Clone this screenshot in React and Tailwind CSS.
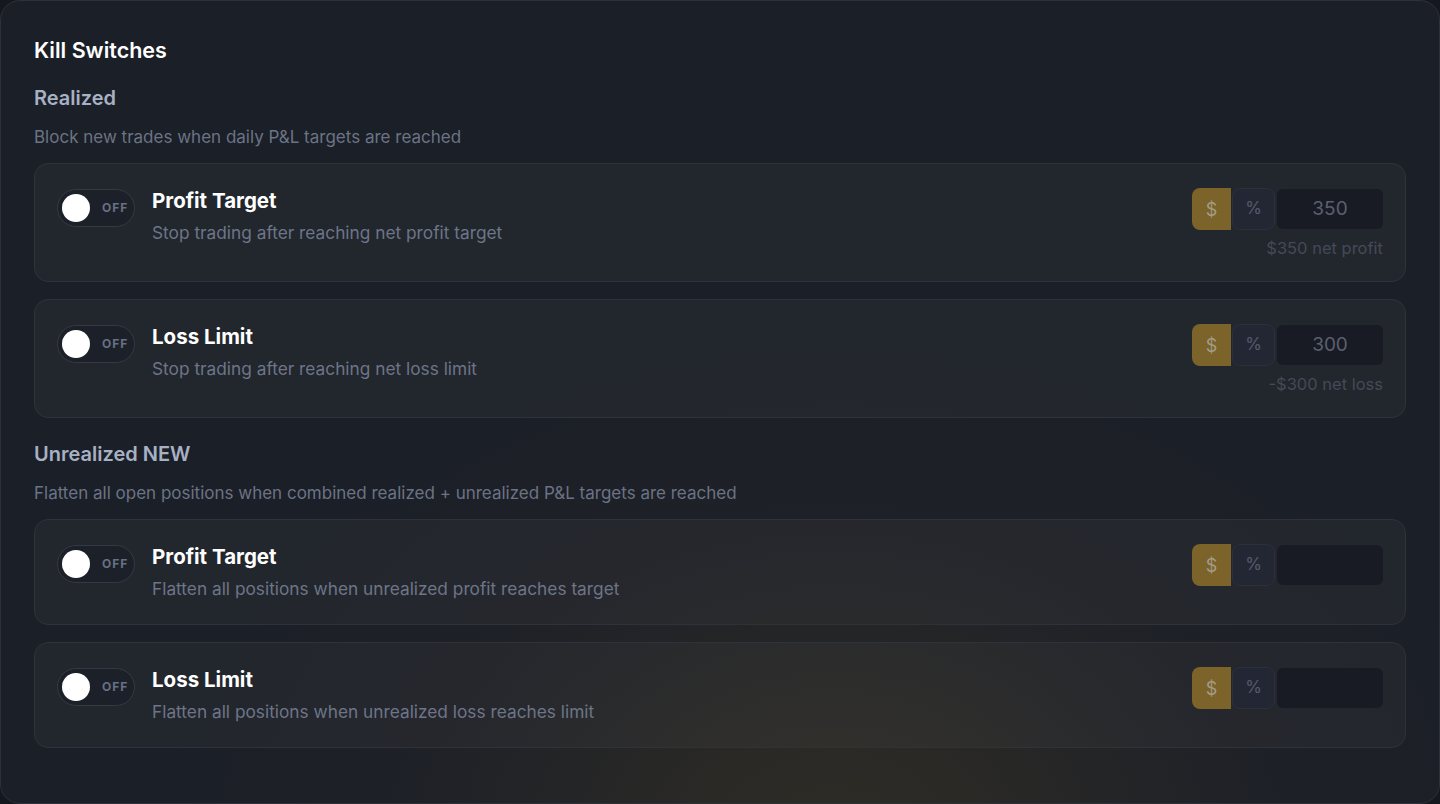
import React from "react";

const font = { fontFamily: "Inter, 'Noto Sans', sans-serif" };

function Toggle() {
  return (
    <div className="mt-[1px] flex h-[38px] w-[78px] shrink-0 items-center rounded-full border border-[#343944] bg-[#1c2029] pl-[4px]">
      <div className="h-[28px] w-[28px] rounded-full bg-white" />
      <span className="ml-[12px] text-[12px] font-bold tracking-[0.08em] text-[#687084]">OFF</span>
    </div>
  );
}

function AmountControl({ value, hint }) {
  return (
    <div className="flex flex-col items-end">
      <div className="flex h-[42px] items-stretch">
        <div className="flex w-[39px] items-center justify-center rounded-l-lg bg-[#7b6329] text-[18px] text-[#a39b86]">$</div>
        <div className="ml-px flex w-[43px] items-center justify-center rounded-lg border border-[#2c303d] bg-[#232734] text-[17px] text-[#555b6d]">%</div>
        <div className="ml-[2px] mt-px mb-px flex w-[106px] items-center justify-center rounded-md bg-[#181b24] text-[19px] text-[#5a6070]">
          {value}
        </div>
      </div>
      {hint && <div className="mt-[8px] text-[16.5px] leading-[20px] text-[#444a57]">{hint}</div>}
    </div>
  );
}

function SwitchCard({ title, desc, value, hint }) {
  return (
    <div className="flex items-start justify-between rounded-[14px] border border-[#2e323b] bg-white/[0.03] px-[22px] pt-[24px] pb-[23px]">
      <div className="flex items-start gap-[17px]">
        <Toggle />
        <div className="flex flex-col">
          <div className="text-[20.5px] font-bold leading-[26px] text-white">{title}</div>
          <div className="mt-[7px] text-[17.3px] leading-[24px] text-[#6d7588]">{desc}</div>
        </div>
      </div>
      <AmountControl value={value} hint={hint} />
    </div>
  );
}

function Section({ heading, desc, children }) {
  return (
    <div className="flex flex-col">
      <div className="text-[20px] font-semibold leading-[28px] text-[#a7b1c4]">{heading}</div>
      <div className="mt-[13px] text-[17px] leading-[24px] text-[#6b7385]">{desc}</div>
      <div className="mt-[14px] flex flex-col gap-[17px]">{children}</div>
    </div>
  );
}

export default function App() {
  return (
    <div style={font} className="h-[804px] w-[1440px] bg-[#15181f]">
      <div className="h-full w-full rounded-[20px] border border-[#2d313a] bg-[#1b1f27] bg-[radial-gradient(ellipse_55%_75%_at_58%_105%,rgba(64,56,36,0.55),rgba(40,38,40,0.25)_55%,transparent_85%)] px-[33px] pt-[35px]">
        <div className="text-[21.5px] font-semibold leading-[28px] text-white">Kill Switches</div>
        <div className="mt-[20px] flex flex-col gap-[22px]">
          <Section heading="Realized" desc="Block new trades when daily P&L targets are reached">
            <SwitchCard
              title="Profit Target"
              desc="Stop trading after reaching net profit target"
              value="350"
              hint="$350 net profit"
            />
            <SwitchCard
              title="Loss Limit"
              desc="Stop trading after reaching net loss limit"
              value="300"
              hint="-$300 net loss"
            />
          </Section>
          <Section
            heading="Unrealized NEW"
            desc="Flatten all open positions when combined realized + unrealized P&L targets are reached"
          >
            <SwitchCard
              title="Profit Target"
              desc="Flatten all positions when unrealized profit reaches target"
              value=""
            />
            <SwitchCard
              title="Loss Limit"
              desc="Flatten all positions when unrealized loss reaches limit"
              value=""
            />
          </Section>
        </div>
      </div>
    </div>
  );
}
